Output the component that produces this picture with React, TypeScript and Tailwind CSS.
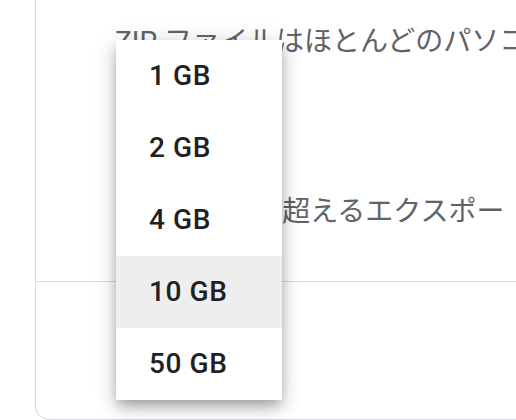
import { useState } from "react";

const sizes = ["1 GB", "2 GB", "4 GB", "10 GB", "50 GB"];

export default function App() {
  const [selected, setSelected] = useState("10 GB");

  return (
    <div className="relative w-[516px] h-[420px] overflow-hidden bg-white font-['Roboto','Noto_Sans_CJK_JP',sans-serif]">
      <div className="ml-[35px] -mt-5 h-[440px] w-[560px] overflow-hidden rounded-bl-[14px] border border-[#d5d7da] bg-white">
        <div className="h-[301px] border-b border-[#dadce0] pl-[79px] text-[28px] text-[#606368] whitespace-nowrap">
          <p className="pt-[41px] leading-[40px]">
            ZIP ファイルはほとんどのパソコンで開くことができます。
          </p>
          <p className="mt-[130px] w-[393px] overflow-hidden leading-[40px]">
            最大サイズを超えるエクスポートは複数のファイルに分割されます。
          </p>
        </div>
      </div>

      <ul className="absolute left-[116px] top-[40px] w-[166px] bg-white shadow-[0_6px_10px_-2px_rgba(0,0,0,0.22),0_10px_18px_0_rgba(0,0,0,0.14),0_2px_24px_0_rgba(0,0,0,0.12)]">
        {sizes.map((size) => (
          <li
            key={size}
            onClick={() => setSelected(size)}
            className={`${
              selected === size ? "bg-[#eeeeee]" : "bg-white"
            } flex h-[72px] items-center pl-[33px] text-[28px] font-medium tracking-[0.6px] text-[#202124] cursor-pointer`}
          >
            {size}
          </li>
        ))}
      </ul>
    </div>
  );
}
